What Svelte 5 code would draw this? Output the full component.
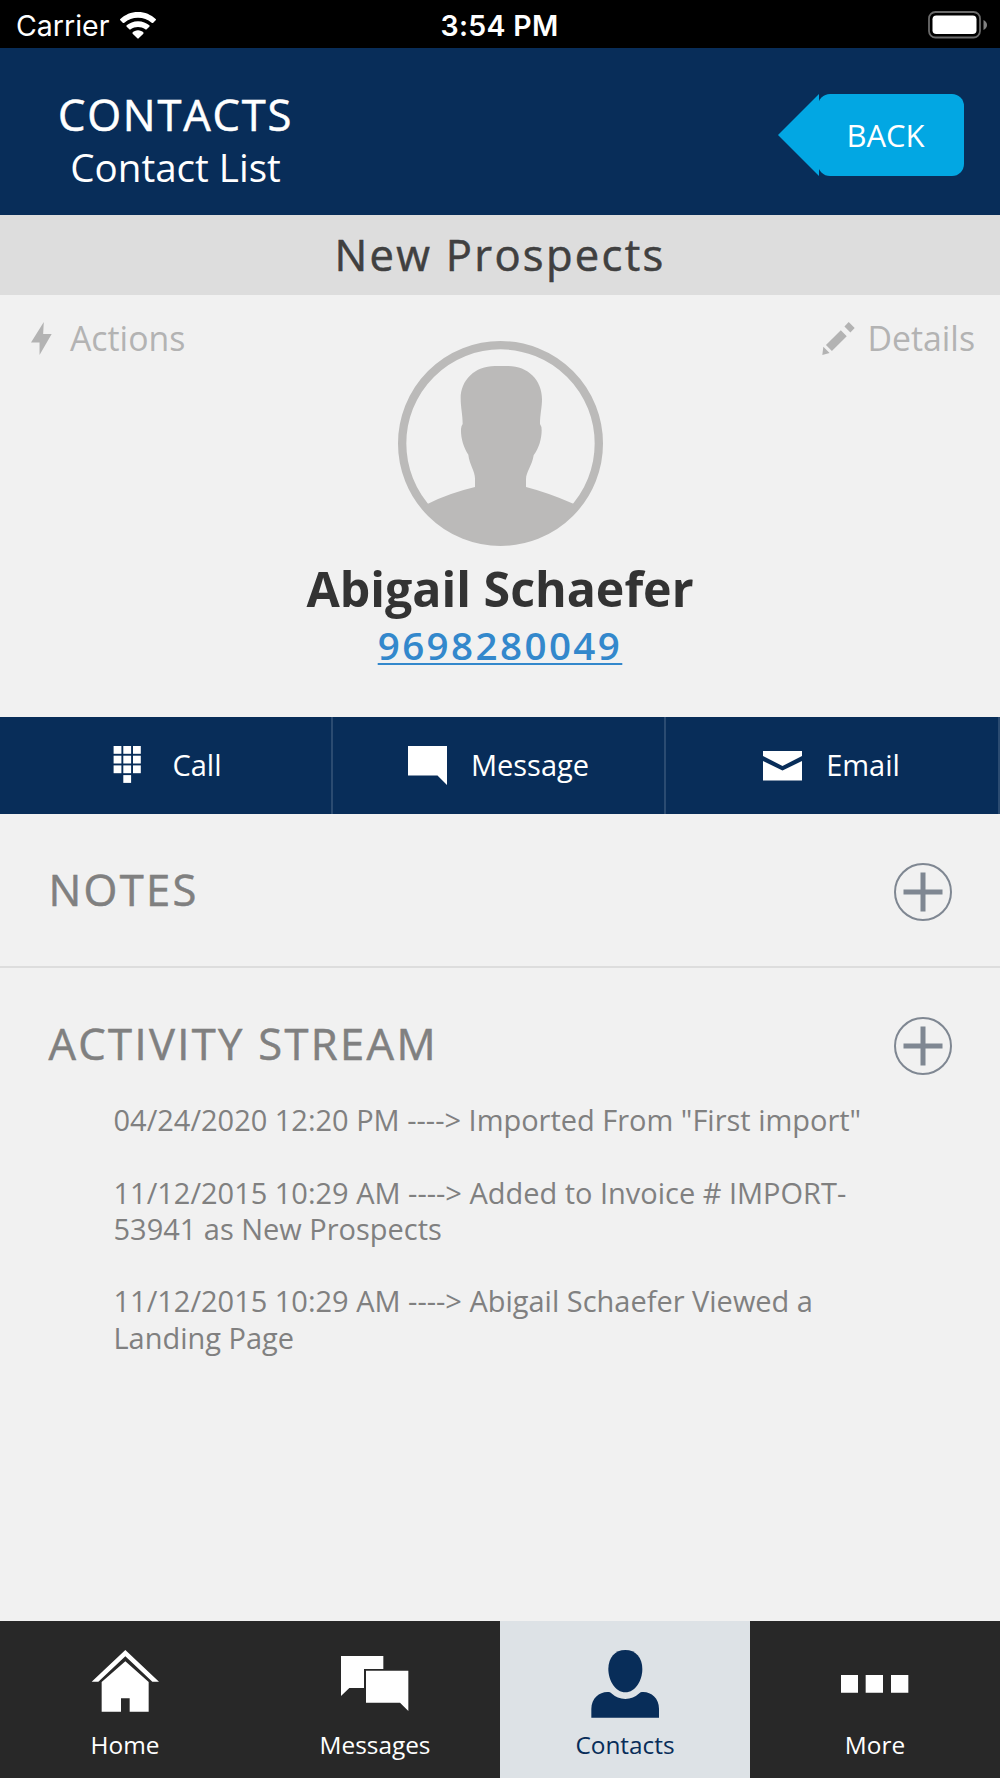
<script>
	const contact = {
		group: 'New Prospects',
		name: 'Abigail Schaefer',
		phone: '9698280049'
	};

	const activity = [
		'04/24/2020 12:20 PM ----> Imported From "First import"',
		'11/12/2015 10:29 AM ----> Added to Invoice # IMPORT-\u200b53941 as New Prospects',
		'11/12/2015 10:29 AM ----> Abigail Schaefer Viewed a Landing Page'
	];

	// x, y of every key on the dial pad
	const keys = [
		[0, 0], [1, 0], [2, 0],
		[0, 1], [1, 1], [2, 1],
		[0, 2], [1, 2], [2, 2],
		[1, 3]
	];

	const tabs = ['Home', 'Messages', 'Contacts', 'More'];
	let active = $state('Contacts');
</script>

{#snippet plus(label)}
	<button class="plus" aria-label={label}>
		<svg viewBox="0 0 58 58" width="58" height="58">
			<circle cx="29" cy="29" r="28" fill="none" stroke="#7f8792" stroke-width="2" />
			<path d="M29 9.5V48.5M9.5 29H48.5" stroke="#7f8792" stroke-width="5" />
		</svg>
	</button>
{/snippet}

<div class="app">
	<div class="status">
		<div class="carrier">
			<span>Carrier</span>
			<svg viewBox="0 0 108 81" width="36" height="27" fill="#fff">
				<path d="M54 0C75 0 93 8 107 21Q109 23 107 25L99 33Q97 34 95 32C83 22 70 17 54 17S25 22 13 32Q11 34 9 33L1 25Q-1 23 1 21C15 8 33 0 54 0Z" />
				<path d="M54 28C68 28 79 33 88 40Q90 42 88 44L80 52Q78 54 76 52C69 47 62 45 54 45S39 47 32 52Q30 54 28 52L20 44Q18 42 20 40C29 33 40 28 54 28Z" />
				<path d="M54 55C61 55 66 58 70 61Q71 63 70 65L56 79Q54 81 52 79L38 65Q37 63 38 61C42 58 47 55 54 55Z" />
			</svg>
		</div>
		<span class="time">3:54 PM</span>
		<div class="battery">
			<svg viewBox="0 0 59 28" width="59" height="28">
				<rect x="1" y="1" width="51" height="25.5" rx="6.5" fill="none" stroke="#6b6b6b" stroke-width="1.8" />
				<rect x="4.5" y="4.5" width="44" height="18.5" rx="3.8" fill="#fff" />
				<path d="M55.5 9Q59 11 59 14T55.5 19Z" fill="#808080" />
			</svg>
		</div>
	</div>

	<header>
		<div class="titles">
			<h1>CONTACTS</h1>
			<p>Contact List</p>
		</div>
		<button class="back">BACK</button>
	</header>

	<div class="group">{contact.group}</div>

	<section class="profile">
		<button class="link">
			<svg viewBox="0 0 64 100" width="21" height="33">
				<path d="M39 0L37 36H63L26 100V62H0Z" fill="#b3b3b3" />
			</svg>
			Actions
		</button>

		<div class="person">
			<svg viewBox="0 0 615 615" width="205" height="205">
				<circle cx="307.5" cy="307.5" r="295" fill="none" stroke="#bbbab9" stroke-width="25" />
				<path
					d="M90 488Q155 456 231 438V412C231 390 214 370 211 341C196 318 188 290 189 264Q190 253 194 249C194 220 188 200 188 172C188 118 230 75 291 75H331C390 75 432 118 432 174C432 200 426 220 426 249Q431 255 431 268C431 292 423 322 407 343C402 375 384 393 384 415V438Q450 455 526 488L540 500A300 300 0 0 1 75 500Z"
					fill="#bbbab9"
				/>
			</svg>
			<h2>{contact.name}</h2>
			<a href="tel:{contact.phone}">{contact.phone}</a>
		</div>

		<button class="link end">
			<svg viewBox="0 0 98 100" width="33" height="33" fill="#b3b3b3">
				<path d="M80 0L98 18L85 32L67 14ZM56 25L74 43L29 88L11 70ZM3 75L22 94L0 100Z" />
			</svg>
			Details
		</button>
	</section>

	<div class="actions">
		<button>
			<svg viewBox="0 0 39 39" width="39" height="39" fill="#fff">
				{#each keys as [x, y]}
					<rect x={4.6 + x * 9.7} y={y * 9.7} width="7.8" height="7.8" />
				{/each}
			</svg>
			<span>Call</span>
		</button>
		<button>
			<svg viewBox="0 0 39 39" width="39" height="39" fill="#fff">
				<path d="M0 0H39V39L29.5 29.5H0Z" />
			</svg>
			<span>Message</span>
		</button>
		<button>
			<svg viewBox="0 0 39 39" width="39" height="39" fill="#fff">
				<path d="M0 5H39V10L19.5 20L0 10ZM0 15L19.5 24.5L39 15V34.5H0Z" />
			</svg>
			<span>Email</span>
		</button>
	</div>

	<section class="notes">
		<div class="heading">
			<h3>NOTES</h3>
			{@render plus('Add note')}
		</div>
	</section>

	<section class="stream">
		<div class="heading">
			<h3>ACTIVITY STREAM</h3>
			{@render plus('Add activity')}
		</div>
		<ul>
			{#each activity as entry}
				<li>{entry}</li>
			{/each}
		</ul>
	</section>

	<nav>
		{#each tabs as tab}
			<button class:active={tab === active} onclick={() => (active = tab)}>
				<svg viewBox="0 0 204 204" width="68" height="68" fill="currentColor">
					{#if tab === 'Home'}
						<path d="M103 0L204 95H184L103 19L22 95H2Z" />
						<path d="M103 34L173 96V185H116V145H90V185H32V96Z" />
					{:else if tab === 'Messages'}
						<path d="M0 18H127V57H69V114H25L0 138Z" />
						<path d="M75 62H202V183L177 158H75Z" />
					{:else if tab === 'Contacts'}
						<path d="M103 0C134 0 154 23 154 57C154 92 133 127 103 127S52 92 52 57C52 23 72 0 103 0Z" />
						<path d="M1 203V176C1 145 25 126 49 126H53Q57 126 61 130Q79 147 103 147T145 130Q149 126 153 126H157C181 126 204 145 204 176V203Z" />
					{:else}
						<path d="M0 75H51V128H0ZM74 75H126V128H74ZM150 75H202V128H150Z" />
					{/if}
				</svg>
				<span>{tab}</span>
			</button>
		{/each}
	</nav>
</div>

<style>
	:global(body) {
		background: #f1f1f1;
	}

	.app {
		display: flex;
		flex-direction: column;
		width: 1000px;
		height: 1778px;
		font-family: 'Open Sans', sans-serif;
		background: #f1f1f1;
		overflow: hidden;
	}

	h1,
	h2,
	h3,
	p,
	ul {
		margin: 0;
		padding: 0;
		font-weight: 400;
	}

	button {
		margin: 0;
		padding: 0;
		border: none;
		background: none;
		font-family: inherit;
		color: inherit;
	}

	svg {
		display: block;
		flex: none;
	}

	/* a touch heavier than regular */
	h1,
	h3,
	.group {
		-webkit-text-stroke: 0.55px currentColor;
	}

	.status {
		display: grid;
		grid-template-columns: 1fr auto 1fr;
		align-items: center;
		height: 48px;
		box-sizing: border-box;
		padding: 0 13px 0 16px;
		background: #000;
		color: #fff;
		font-family: Inter, sans-serif;
		font-size: 28.5px;
		line-height: 48px;
	}

	.carrier {
		display: flex;
		align-items: center;
		gap: 11px;
	}

	.carrier span,
	.time {
		padding-top: 2px;
	}

	.time {
		margin-right: 4px;
		font-weight: 600;
		letter-spacing: 0.3px;
	}

	.battery {
		display: flex;
		justify-content: flex-end;
	}

	header {
		display: flex;
		justify-content: space-between;
		height: 167px;
		box-sizing: border-box;
		padding: 45px 36px 0 58px;
		background: #082d59;
		color: #fff;
	}

	.titles {
		text-align: center;
	}

	h1 {
		font-size: 43.5px;
		letter-spacing: 1.8px;
		line-height: 44px;
	}

	.titles p {
		font-size: 38.6px;
		line-height: 61px;
	}

	.back {
		position: relative;
		width: 146px;
		height: 82px;
		margin-top: 1px;
		padding: 0 11px 0 0;
		border-radius: 12px;
		background: #02a7e3;
		font-size: 31px;
	}

	.back::before {
		content: '';
		position: absolute;
		left: -40px;
		top: 0;
		border: 41px solid transparent;
		border-left: none;
		border-right-color: #02a7e3;
	}

	.group {
		height: 80px;
		background: #dddddd;
		color: #404040;
		font-size: 43.5px;
		letter-spacing: 2.3px;
		line-height: 80px;
		text-align: center;
	}

	.profile {
		display: grid;
		grid-template-columns: 1fr auto 1fr;
		align-items: start;
		height: 422px;
		box-sizing: border-box;
		padding: 22px 25px 0 31px;
	}

	.link {
		display: flex;
		align-items: center;
		gap: 18px;
		font-size: 33.8px;
		line-height: 42px;
		color: #b3b3b3;
	}

	.end {
		justify-self: end;
		gap: 13px;
	}

	.person {
		display: flex;
		flex-direction: column;
		align-items: center;
		margin-right: 6px;
		padding-top: 24px;
	}

	h2 {
		margin-top: 12px;
		color: #333;
		font-size: 48.3px;
		font-weight: 700;
		line-height: 60px;
	}

	.person a {
		color: #3388cc;
		font-size: 38.6px;
		font-weight: 600;
		letter-spacing: 2.4px;
		line-height: 54px;
		text-decoration: underline;
		text-decoration-thickness: 2px;
		text-underline-offset: 3px;
	}

	.actions {
		display: grid;
		grid-template-columns: 333px 333px 334px;
		height: 97px;
		background: #082d59;
		color: #fff;
	}

	.actions button {
		display: flex;
		align-items: center;
		justify-content: center;
		gap: 24px;
		border-right: 2px solid #2b4b71;
		font-size: 29px;
	}

	.actions button:last-child {
		padding-right: 1px;
	}

	.actions span {
		padding-bottom: 2px;
	}

	.notes {
		height: 152px;
		border-bottom: 2px solid #dddddd;
	}

	.stream {
		flex: 1;
	}

	.heading {
		display: flex;
		align-items: center;
		justify-content: space-between;
		height: 155px;
		padding: 0 48px 0 48.5px;
		color: #808080;
	}

	h3 {
		margin-top: -5px;
		font-size: 43.5px;
		letter-spacing: 2.35px;
	}

	ul {
		display: flex;
		flex-direction: column;
		gap: 36.3px;
		margin-top: -21px;
		padding: 0 112px 0 113.5px;
		list-style: none;
		color: #808080;
		font-size: 28.98px;
		line-height: 36.3px;
	}

	nav {
		display: grid;
		grid-template-columns: repeat(4, 1fr);
		height: 157px;
		background: #282828;
		color: #fff;
	}

	nav button {
		display: flex;
		flex-direction: column;
		align-items: center;
		padding-top: 29px;
		font-size: 24.4px;
		line-height: 34px;
	}

	nav span {
		margin-top: 10px;
	}

	nav .active {
		background: #dde2e6;
		color: #082d59;
	}
</style>
